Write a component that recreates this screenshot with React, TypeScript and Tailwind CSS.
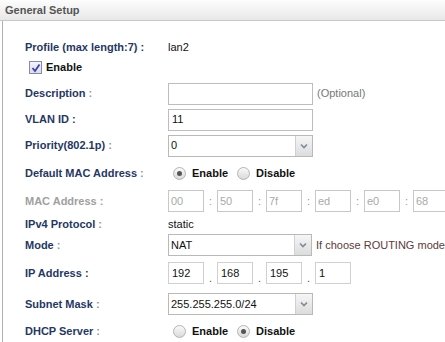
import React from "react";

const font = "font-['Liberation_Sans',Arial,sans-serif]";

const Radio: React.FC<{ checked?: boolean }> = ({ checked }) => (
  <span className="relative inline-block w-[13px] h-[13px] rounded-full border border-[#b4b4b4] bg-gradient-to-b from-[#fafafa] to-[#d9d9d9] shrink-0">
    {checked && (
      <span className="absolute left-[3px] top-[3px] w-[5px] h-[5px] rounded-full bg-[#555]" />
    )}
  </span>
);

const RadioPair: React.FC<{ enabled: boolean }> = ({ enabled }) => (
  <div className="flex items-center ml-[5px] text-[11px] font-bold text-[#111]">
    <Radio checked={enabled} />
    <span className="ml-[6px]">Enable</span>
    <span className="ml-[9px] flex items-center">
      <Radio checked={!enabled} />
      <span className="ml-[6px]">Disable</span>
    </span>
  </div>
);

const Select: React.FC<{ value: string }> = ({ value }) => (
  <div className="flex w-[145px] h-[22px] border border-[#b9b9b9] bg-white">
    <div className="flex-1 flex items-center pl-[2px] text-[11px] text-[#111]">{value}</div>
    <div className="w-[17px] h-full border-l border-[#d0d0d0] bg-gradient-to-b from-[#f6f6f6] to-[#dcdcdc] flex items-center justify-center">
      <svg width="8" height="6" viewBox="0 0 8 6">
        <path d="M1 1.5 L4 4.5 L7 1.5" fill="none" stroke="#7a8ca0" strokeWidth="1.6" />
      </svg>
    </div>
  </div>
);

const Row: React.FC<{ label: React.ReactNode; className: string; children?: React.ReactNode }> = ({
  label,
  className,
  children,
}) => (
  <div className={`flex items-center ${className}`}>
    <div className="w-[143px] shrink-0 text-[11px] font-bold text-[#1f3864]">{label}</div>
    {children}
  </div>
);

export default function App() {
  const mac = ["00", "50", "7f", "ed", "e0", "68"];
  const ip = ["192", "168", "195", "1"];

  return (
    <div className={`w-[445px] h-[342px] overflow-hidden bg-white ${font}`}>
      {/* header */}
      <div className="h-[21px] border-b border-[#c8c8c8] bg-gradient-to-b from-[#fdfdfd] to-[#e8e8e8] flex items-center pl-[5px]">
        <span className="text-[11px] font-bold text-[#555]">General Setup</span>
      </div>

      <div className="ml-[2px] border-l border-[#b0b0b0] h-[321px] pl-[22px] flex flex-col">
        <Row label="Profile (max length:7) :" className="mt-[17px] h-[18px]">
          <span className="text-[11px] text-[#111]">lan2</span>
        </Row>

        <div className="flex items-center mt-[3px] h-[18px] pl-[4px]">
          <span className="relative w-[13px] h-[13px] border border-[#8a8aa8] bg-gradient-to-b from-[#f4f4fb] to-[#dcdcec] shrink-0">
            <svg className="absolute left-[1px] top-[1px]" width="10" height="10" viewBox="0 0 10 10">
              <path d="M1.5 5 L4 8 L8.5 1.5" fill="none" stroke="#3b44a8" strokeWidth="1.8" />
            </svg>
          </span>
          <span className="ml-[4px] text-[11px] font-bold text-[#111]">Enable</span>
        </div>

        <Row label={<>Description <span className="text-[#8a96aa]">:</span></>} className="mt-[6px] h-[22px]">
          <div className="w-[145px] h-[22px] border border-[#bdbdbd]" />
          <span className="ml-[4px] text-[11px] text-[#777]">(Optional)</span>
        </Row>

        <Row label="VLAN ID :" className="mt-[4px] h-[22px]">
          <div className="w-[145px] h-[22px] border border-[#bdbdbd] flex items-center pl-[3px] text-[11px] text-[#111]">
            11
          </div>
        </Row>

        <Row label={<>Priority(802.1p) <span className="text-[#8a96aa]">:</span></>} className="mt-[4px] h-[22px]">
          <Select value="0" />
        </Row>

        <Row label={<>Default MAC Address <span className="text-[#8a96aa]">:</span></>} className="mt-[6px] h-[22px]">
          <RadioPair enabled />
        </Row>

        <Row label={<span className="text-[#a0a0a0]">MAC Address :</span>} className="mt-[6px] h-[22px]">
          <div className="flex items-center whitespace-nowrap">
            {mac.map((m, i) => (
              <React.Fragment key={i}>
                {i > 0 && <span className="w-[13px] text-center text-[11px] text-[#999]">:</span>}
                <div className="w-[36px] h-[22px] shrink-0 border border-[#c8c8c8] flex items-center pl-[2px] text-[11px] text-[#aaa]">
                  {m}
                </div>
              </React.Fragment>
            ))}
          </div>
        </Row>

        <Row label={<>IPv4 Protocol <span className="text-[#8a96aa]">:</span></>} className="mt-[3px] h-[18px]">
          <span className="text-[11px] text-[#111]">static</span>
        </Row>

        <Row label={<>Mode <span className="text-[#8a96aa]">:</span></>} className="mt-[1px] h-[22px]">
          <Select value="NAT" />
          <span className="ml-[4px] text-[11px] text-[#5c3a3a] whitespace-nowrap">If choose ROUTING mode</span>
        </Row>

        <Row label="IP Address :" className="mt-[6px] h-[22px]">
          <div className="flex h-[22px]">
            {ip.map((p, i) => (
              <React.Fragment key={i}>
                {i > 0 && <span className="w-[13px] self-end text-center text-[11px] leading-[12px] text-[#555]">.</span>}
                <div className="w-[36px] h-[22px] shrink-0 border border-[#d0d0d0] flex items-center pl-[3px] text-[11px] text-[#111]">
                  {p}
                </div>
              </React.Fragment>
            ))}
          </div>
        </Row>

        <Row label={<>Subnet Mask <span className="text-[#8a96aa]">:</span></>} className="mt-[9px] h-[22px]">
          <Select value="255.255.255.0/24" />
        </Row>

        <Row label={<>DHCP Server <span className="text-[#8a96aa]">:</span></>} className="mt-[5px] h-[22px]">
          <RadioPair enabled={false} />
        </Row>
      </div>
    </div>
  );
}
